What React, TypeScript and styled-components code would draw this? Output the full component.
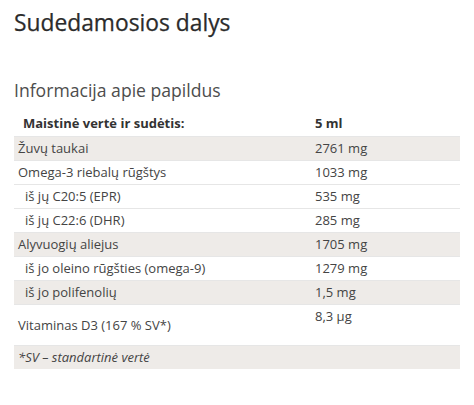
import React from "react";
import styled, { createGlobalStyle } from "styled-components";

const Global = createGlobalStyle`
  html, body { margin: 0; padding: 0; background: #fff; }
  body { font-family: "Open Sans", "Noto Sans", sans-serif; }
`;

const Page = styled.div`
  padding: 8px 14px 0 14px;
  width: 446px;
`;

const Title = styled.h2`
  margin: 0;
  font-size: 22.8px;
  line-height: 30px;
  font-weight: 400;
  color: #2b2b2b;
  -webkit-text-stroke: 0.25px #2b2b2b;
`;

const Subtitle = styled.h3`
  margin: 40px 0 10px 0;
  font-size: 17.6px;
  line-height: 24px;
  font-weight: 400;
  color: #4d4d4d;
`;

const Table = styled.table`
  width: 446px;
  border-collapse: collapse;
  font-size: 13px;
  line-height: 17px;
  color: #444;
`;

const Row = styled.tr<{ $shaded?: boolean; $head?: boolean }>`
  background: ${(p) => (p.$shaded ? "#eeebe8" : "#fff")};
  border-top: ${(p) => (p.$head ? "none" : "1px solid #e6e6e6")};
`;

const Label = styled.td<{ $indent?: boolean }>`
  width: 282px;
  padding: 3px 4px 3px ${(p) => (p.$indent ? "11px" : "4px")};
  vertical-align: middle;
  white-space: nowrap;
`;

const Value = styled.td`
  padding: 3px 4px;
  vertical-align: top;
  white-space: nowrap;
`;

const HeadCell = styled.th<{ $first?: boolean }>`
  text-align: left;
  font-weight: 700;
  color: #333;
  padding: 3px 4px 4px ${(p) => (p.$first ? "9px" : "4px")};
`;

const Note = styled.td`
  padding: 3px 4px;
  font-style: italic;
`;

type Item = { label: string; value: string; shaded?: boolean; indent?: boolean };

const items: Item[] = [
  { label: "Žuvų taukai", value: "2761 mg", shaded: true },
  { label: "Omega-3 riebalų rūgštys", value: "1033 mg" },
  { label: "iš jų C20:5 (EPR)", value: "535 mg", indent: true },
  { label: "iš jų C22:6 (DHR)", value: "285 mg", indent: true },
  { label: "Alyvuogių aliejus", value: "1705 mg", shaded: true },
  { label: "iš jo oleino rūgšties (omega-9)", value: "1279 mg", indent: true },
  { label: "iš jo polifenolių", value: "1,5 mg", shaded: true, indent: true },
];

export default function App() {
  return (
    <>
      <Global />
      <Page>
        <Title>Sudedamosios dalys</Title>
        <Subtitle>Informacija apie papildus</Subtitle>
        <Table>
          <thead>
            <Row $head>
              <HeadCell $first>Maistinė vertė ir sudėtis:</HeadCell>
              <HeadCell>5 ml</HeadCell>
            </Row>
          </thead>
          <tbody>
            {items.map((it) => (
              <Row key={it.label} $shaded={it.shaded}>
                <Label $indent={it.indent}>{it.label}</Label>
                <Value>{it.value}</Value>
              </Row>
            ))}
            <Row>
              <Label>Vitaminas D3 (167 % SV*)</Label>
              <Value>
                8,3 µg
                <br />
                &nbsp;
              </Value>
            </Row>
            <Row $shaded>
              <Note colSpan={2}>*SV – standartinė vertė</Note>
            </Row>
          </tbody>
        </Table>
      </Page>
    </>
  );
}
